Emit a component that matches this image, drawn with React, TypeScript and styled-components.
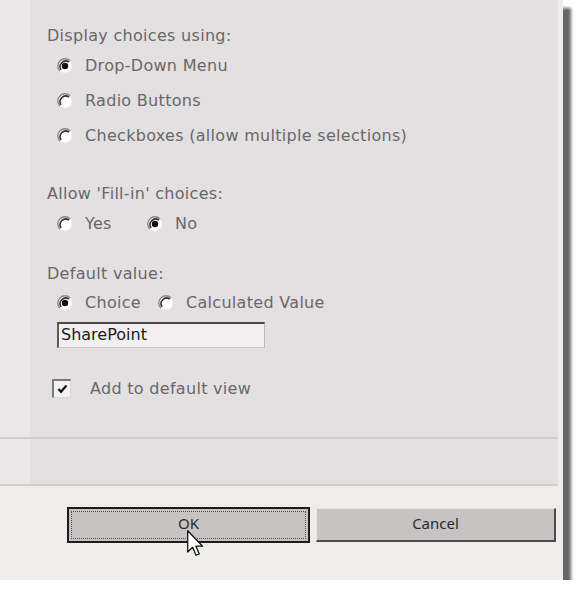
import React from 'react';
import styled, {createGlobalStyle} from 'styled-components';

const Global = createGlobalStyle`
    html, body {
        margin: 0;
        padding: 0;
        background: #ffffff;
    }
`;

const Dialog = styled.div`
    position: relative;
    width: 563px;
    height: 580px;
    background: #efecec;
    box-shadow: 8px 8px 3px rgba(0, 0, 0, 0.6);
    display: flex;
    flex-direction: column;
    font-family: "DejaVu Sans", Verdana, sans-serif;
`;

const Section = styled.div<{h: number}>`
    display: flex;
    width: 558px;
    height: ${p => p.h}px;
    border-bottom: 2px solid #d0cdce;
`;

const Gutter = styled.div`
    width: 30px;
    background: #ebe8e9;
`;

const Panel = styled.div`
    flex: 1;
    background: #e3e0e1;
    padding: 26px 0 0 17px;
    display: flex;
    flex-direction: column;
    color: #6a6768;
    font-size: 16px;
    letter-spacing: 0.3px;
`;

const Heading = styled.div<{top?: number}>`
    height: 20px;
    line-height: 20px;
    margin-top: ${p => p.top || 0}px;
`;

const OptionList = styled.div<{top: number; gap: number}>`
    display: flex;
    flex-direction: column;
    gap: ${p => p.gap}px;
    margin-top: ${p => p.top}px;
    padding-left: 10px;
`;

const OptionRow = styled.div<{top?: number}>`
    display: flex;
    align-items: center;
    height: 20px;
    margin-top: ${p => p.top || 0}px;
    padding-left: 10px;
`;

const Option = styled.label<{width?: number}>`
    display: flex;
    align-items: center;
    gap: 12px;
    height: 20px;
    line-height: 20px;
    min-width: ${p => (p.width ? `${p.width}px` : 'auto')};
`;

const TextBox = styled.div`
    margin: 9px 0 0 10px;
    width: 208px;
    height: 26px;
    box-sizing: border-box;
    border-top: 2px solid #4a4848;
    border-left: 2px solid #5a5858;
    border-right: 1px solid #b9b6b6;
    border-bottom: 1px solid #c9c6c6;
    background: #f1efef;
    color: #1c1c1c;
    font-size: 16px;
    line-height: 22px;
    padding-left: 2px;
    letter-spacing: 0;
`;

const CheckRow = styled.div`
    display: flex;
    align-items: center;
    gap: 19px;
    margin: 30px 0 0 5px;
    height: 20px;
`;

const CheckBox = styled.span`
    width: 19px;
    height: 19px;
    box-sizing: border-box;
    border-top: 2px solid #7b7879;
    border-left: 2px solid #7b7879;
    border-right: 1px solid #d8d6d6;
    border-bottom: 1px solid #d8d6d6;
    background: #f3f2f2;
    display: flex;
    align-items: center;
    justify-content: center;
`;

const Footer = styled.div`
    display: flex;
    gap: 6px;
    padding: 21px 0 0 67px;
`;

const Button = styled.button<{focused?: boolean}>`
    position: relative;
    height: ${p => (p.focused ? 36 : 34)}px;
    margin-top: ${p => (p.focused ? 0 : 1)}px;
    width: ${p => (p.focused ? 243 : 240)}px;
    box-sizing: border-box;
    background: #c6c3c2;
    font-family: "Noto Sans", "Open Sans", sans-serif;
    font-size: 15px;
    color: #2a2a2a;
    padding: 0 0 4px 0;
    border: ${p => (p.focused ? '2px solid #1e1e1e' : 'none')};
    ${p => !p.focused && `
        border-top: 1px solid #e6e4e4;
        border-left: 1px solid #e6e4e4;
        border-right: 2px solid #4c4a4a;
        border-bottom: 2px solid #4c4a4a;
    `}
`;

const FocusRing = styled.span`
    position: absolute;
    inset: 2px;
    border: 1px dotted #555;
    pointer-events: none;
`;

const Cursor = styled.svg`
    position: absolute;
    left: 187px;
    top: 530px;
`;

function Radio({checked}: {checked?: boolean}) {
    return (
        <svg width="16" height="16" viewBox="0 0 16 16">
            <circle cx="8" cy="8" r="7.2" fill="#ffffff" stroke="#e8e6e6" strokeWidth="1.2" />
            <path d="M13.1 2.9 A7.2 7.2 0 0 0 2.9 13.1" fill="none" stroke="#8a8788" strokeWidth="1.4" />
            <path d="M11.9 4.1 A5.6 5.6 0 0 0 4.1 11.9" fill="none" stroke="#333132" strokeWidth="1.6" />
            {checked && <circle cx="8" cy="8" r="3.2" fill="#111" />}
        </svg>
    );
}

export default function App() {
    return <>
        <Global />
        <Dialog>
            <Section h={437}>
                <Gutter />
                <Panel>
                    <Heading>Display choices using:</Heading>
                    <OptionList top={10} gap={15}>
                        <Option><Radio checked />Drop-Down Menu</Option>
                        <Option><Radio />Radio Buttons</Option>
                        <Option><Radio />Checkboxes (allow multiple selections)</Option>
                    </OptionList>

                    <Heading top={38}>Allow 'Fill-in' choices:</Heading>
                    <OptionRow top={10}>
                        <Option width={90}><Radio />Yes</Option>
                        <Option><Radio checked />No</Option>
                    </OptionRow>

                    <Heading top={30}>Default value:</Heading>
                    <OptionRow top={9}>
                        <Option width={101}><Radio checked />Choice</Option>
                        <Option><Radio />Calculated Value</Option>
                    </OptionRow>
                    <TextBox>SharePoint</TextBox>

                    <CheckRow>
                        <CheckBox>
                            <svg width="11" height="10" viewBox="0 0 11 10">
                                <path d="M1.5 5 L4 7.8 L9.5 1.5" fill="none" stroke="#111" strokeWidth="2.2" />
                            </svg>
                        </CheckBox>
                        Add to default view
                    </CheckRow>
                </Panel>
            </Section>
            <Section h={45}>
                <Gutter />
                <Panel />
            </Section>
            <Footer>
                <Button focused>OK<FocusRing /></Button>
                <Button>Cancel</Button>
            </Footer>
            <Cursor width="17" height="27" viewBox="0 0 12 19">
                <path d="M0.5 0.5 L0.5 15.5 L4 12.2 L6.4 17.8 L8.6 16.8 L6.3 11.4 L11 11.4 Z" fill="#fff" stroke="#111" strokeWidth="0.9" strokeLinejoin="round" />
            </Cursor>
        </Dialog>
    </>;
}
